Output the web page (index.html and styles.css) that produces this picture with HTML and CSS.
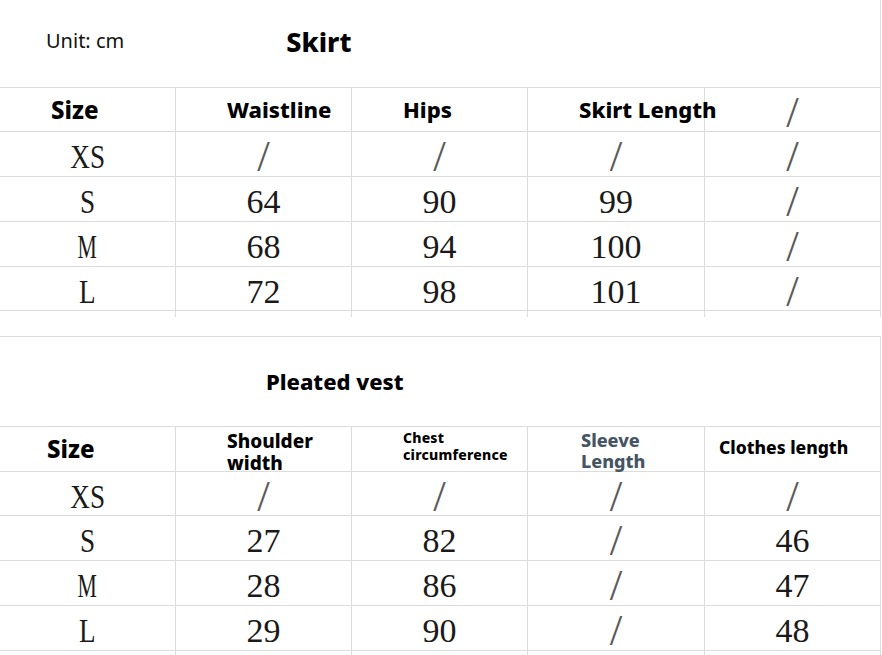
FILE: index.html
```html
<!DOCTYPE html>
<html lang="en">
<head>
<meta charset="utf-8">
<title>Size chart</title>
<link rel="stylesheet" href="styles.css">
</head>
<body>
<main class="sheet">
  <section class="chart chart-skirt">
    <div class="title-row title-row-skirt">
      <span class="unit">Unit: cm</span>
      <h2 class="title title-skirt">Skirt</h2>
    </div>
    <div class="grid grid-skirt">
      <div class="cell head head-size">Size</div>
      <div class="cell head head-a">Waistline</div>
      <div class="cell head head-a">Hips</div>
      <div class="cell head head-a">Skirt Length</div>
      <div class="cell data na">/</div>

      <div class="cell data"><span class="sz">XS</span></div>
      <div class="cell data na">/</div>
      <div class="cell data na">/</div>
      <div class="cell data na">/</div>
      <div class="cell data na">/</div>

      <div class="cell data"><span class="sz">S</span></div>
      <div class="cell data">64</div>
      <div class="cell data">90</div>
      <div class="cell data">99</div>
      <div class="cell data na">/</div>

      <div class="cell data"><span class="sz sz-m">M</span></div>
      <div class="cell data">68</div>
      <div class="cell data">94</div>
      <div class="cell data">100</div>
      <div class="cell data na">/</div>

      <div class="cell data"><span class="sz">L</span></div>
      <div class="cell data">72</div>
      <div class="cell data">98</div>
      <div class="cell data">101</div>
      <div class="cell data na">/</div>
    </div>
    <div class="tail tail-skirt">
      <div class="tail-cell"></div><div class="tail-cell"></div><div class="tail-cell"></div><div class="tail-cell"></div><div class="tail-cell"></div>
    </div>
  </section>

  <section class="chart chart-vest">
    <div class="title-row title-row-vest">
      <h2 class="title title-vest">Pleated vest</h2>
    </div>
    <div class="grid grid-vest">
      <div class="cell head head-size2">Size</div>
      <div class="cell head head-shoulder">Shoulder<br>width</div>
      <div class="cell head head-chest">Chest<br>circumference</div>
      <div class="cell head head-sleeve">Sleeve<br>Length</div>
      <div class="cell head head-clothes">Clothes length</div>

      <div class="cell data"><span class="sz">XS</span></div>
      <div class="cell data na">/</div>
      <div class="cell data na">/</div>
      <div class="cell data na">/</div>
      <div class="cell data na">/</div>

      <div class="cell data"><span class="sz">S</span></div>
      <div class="cell data">27</div>
      <div class="cell data">82</div>
      <div class="cell data na">/</div>
      <div class="cell data">46</div>

      <div class="cell data"><span class="sz sz-m">M</span></div>
      <div class="cell data">28</div>
      <div class="cell data">86</div>
      <div class="cell data na">/</div>
      <div class="cell data">47</div>

      <div class="cell data"><span class="sz">L</span></div>
      <div class="cell data">29</div>
      <div class="cell data">90</div>
      <div class="cell data na">/</div>
      <div class="cell data">48</div>
    </div>
    <div class="tail tail-vest">
      <div class="tail-cell"></div><div class="tail-cell"></div><div class="tail-cell"></div><div class="tail-cell"></div><div class="tail-cell"></div>
    </div>
  </section>
</main>
</body>
</html>
```

FILE: styles.css
```css
* {
  box-sizing: border-box;
}

html, body {
  margin: 0;
  padding: 0;
  background: #ffffff;
}

body {
  width: 882px;
  height: 655px;
  overflow: hidden;
  font-family: "Noto Sans", "Open Sans", sans-serif;
  color: #000;
}

.sheet {
  width: 882px;
}

.chart {
  width: 881px;
}

/* ---------- title rows ---------- */
.title-row {
  display: flex;
  align-items: flex-start;
  border-right: 1px solid #dcdcdc;
  border-bottom: 1px solid #dcdcdc;
}

.title-row-skirt {
  height: 88px;
  padding-left: 46px;
}

.title-row-vest {
  height: 91px;
  padding-left: 266px;
  border-top: 1px solid #dcdcdc;
}

.unit {
  font-size: 20px;
  line-height: 20px;
  font-weight: 400;
  margin-top: 31px;
  color: #111;
}

.title {
  margin: 0;
  font-weight: 800;
  color: #000;
}

.title-skirt {
  font-size: 27px;
  line-height: 27px;
  margin-top: 28px;
  margin-left: 162px;
}

.title-vest {
  font-size: 22px;
  line-height: 22px;
  margin-top: 33px;
}

/* ---------- grids ---------- */
.grid {
  display: grid;
  grid-template-columns: 176px 176px 176px 177px 176px;
}

.grid-skirt {
  grid-template-rows: 44px 45px 45px 45px 44px;
}

.grid-vest {
  grid-template-rows: 45px 44px 45px 45px 45px;
}

.cell {
  border-right: 1px solid #dcdcdc;
  border-bottom: 1px solid #dcdcdc;
  overflow: visible;
  white-space: nowrap;
}

.head {
  font-weight: 800;
  color: #000;
  font-size: 22px;
  line-height: 22px;
}

.head-size {
  font-size: 24px;
  line-height: 24px;
  padding: 10px 0 0 51px;
}

.head-a {
  padding: 10px 0 0 51px;
}

.head-size2 {
  font-size: 24px;
  line-height: 24px;
  padding: 10px 0 0 47px;
}

.head-shoulder {
  font-size: 19px;
  line-height: 22px;
  padding: 3px 0 0 51px;
}

.head-chest {
  font-size: 14px;
  line-height: 17px;
  letter-spacing: 0.2px;
  padding: 2px 0 0 51px;
}

.head-sleeve {
  font-size: 18px;
  line-height: 21px;
  padding: 3px 0 0 53px;
  color: #465564;
}

.head-clothes {
  font-size: 17.5px;
  line-height: 18px;
  padding: 11px 0 0 14px;
}

/* ---------- data cells ---------- */
.data {
  font-family: "Liberation Serif", "Times New Roman", serif;
  font-size: 34px;
  line-height: 34px;
  font-weight: 400;
  color: #1a1a1a;
  text-align: center;
  padding-top: 8px;
}

.na {
  font-size: 45px;
  color: #5a5a5a;
  padding-top: 7px;
}

.sz {
  display: inline-block;
  transform: scaleX(0.8);
}

.sz-m {
  transform: scaleX(0.64);
}

/* ---------- tails ---------- */
.tail {
  display: grid;
  grid-template-columns: 176px 176px 176px 177px 176px;
}

.tail-skirt {
  height: 25px;
}

.tail-vest {
  height: 4px;
}

.tail-cell {
  height: 6px;
  border-right: 1px solid #dcdcdc;
}
```
